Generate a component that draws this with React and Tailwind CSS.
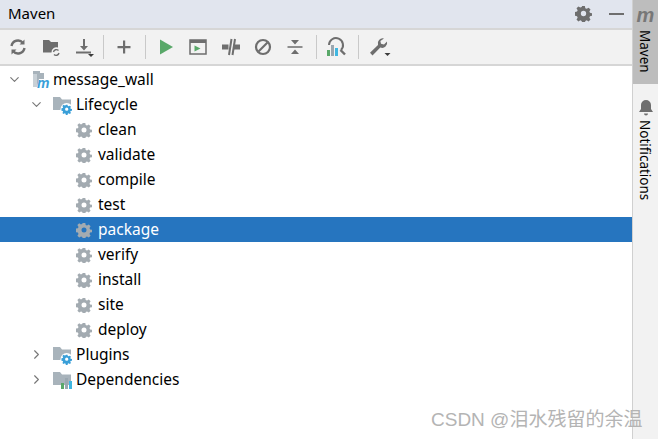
import { ChevronDown, ChevronRight } from "lucide-react";

const gearPath =
  "M6.700 1h2.600l.4 2 1.300.6 1.800-1.100 1.800 1.800-1.100 1.800.6 1.300 2 .4v2.400l-2 .4-.6 1.300 1.100 1.800-1.800 1.800-1.800-1.100-1.300.6-.4 2H6.700l-.4-2-1.300-.6-1.800 1.100-1.800-1.800 1.100-1.800-.6-1.300-2-.4V6.600l2-.4.6-1.300-1.100-1.800 1.800-1.800 1.800 1.100 1.300-.6zM8 5.500a2.500 2.500 0 1 0 0 5 2.500 2.500 0 0 0 0-5z";

function Gear({ size = 16, color = "#a3abb1", className = "" }) {
  return (
    <svg width={size} height={size} viewBox="0 0 16 16" className={className}>
      <path fill={color} fillRule="evenodd" d={gearPath} />
    </svg>
  );
}

function Folder({ children }) {
  return (
    <svg width="22" height="20" viewBox="0 0 22 20">
      <path fill="#a8b3bb" d="M1 2h7l2 2.500h9V15H1z" />
      {children}
    </svg>
  );
}

function SmallGear() {
  return (
    <g transform="translate(9.500 9) scale(0.65)">
      <circle cx="8" cy="8" r="9.500" fill="#fff" />
      <path fill="#3a9fd8" fillRule="evenodd" d={gearPath} />
    </g>
  );
}

function Bars({ x = 0, y = 0 }) {
  return (
    <g transform={`translate(${x} ${y})`}>
      <rect x="0" y="5" width="3" height="6" fill="#59a869" />
      <rect x="4" y="0" width="3" height="11" fill="#9aa7b0" />
      <rect x="8" y="3" width="3" height="8" fill="#40b6e0" />
    </g>
  );
}

function ToolIcon({ children }) {
  return (
    <svg width="20" height="20" viewBox="0 0 20 20" className="shrink-0">
      {children}
    </svg>
  );
}

const c = "#6e6e6e";

function Sep() {
  return <div className="mx-[5px] h-[24px] w-px shrink-0 bg-[#c9c9c9]" />;
}

function Toolbar() {
  return (
    <div className="flex h-[36px] shrink-0 items-center border-b-2 border-[#d6d6d6] bg-[#f2f2f2] pl-[8px]">
      {/* reload */}
      <ToolIcon>
        <path fill="none" stroke={c} strokeWidth="2.400" d="M3.500 9a6.500 6.500 0 0 1 11.500-3M16.500 11a6.500 6.500 0 0 1-11.500 3" />
        <path fill={c} d="M16.500 2.500v5h-5zM3.500 17.500v-5h5z" />
      </ToolIcon>
      <div className="w-[13px]" />
      {/* folder with reload */}
      <ToolIcon>
        <path fill={c} d="M2 3h6l2 2h7v5.500a5 5 0 0 0-6.500 5H2z" />
        <path fill="none" stroke={c} strokeWidth="1.400" d="M12.500 15a3 3 0 0 1 5-1.500M18 16a3 3 0 0 1-5 1.500" />
      </ToolIcon>
      <div className="w-[13px]" />
      {/* download */}
      <ToolIcon>
        <path fill={c} d="M9 2h2v7h3l-4 4.500L6 9h3zM2 14.500h15v2H2z" />
        <path fill="#3c3c3c" d="M14 17h6l-3 3z" />
      </ToolIcon>
      <div className="w-[4px]" />
      <Sep />
      <div className="w-[5px]" />
      {/* plus */}
      <ToolIcon>
        <path fill={c} d="M9 3.500h2.200V9h5.300v2.200h-5.300v5.300H9v-5.300H3.500V9H9z" />
      </ToolIcon>
      <div className="w-[6px]" />
      <Sep />
      <div className="w-[5px]" />
      {/* run */}
      <ToolIcon>
        <path fill="#59a869" d="M4 2.500 17 10 4 17.500z" />
      </ToolIcon>
      <div className="w-[12px]" />
      {/* run config */}
      <ToolIcon>
        <path fill="none" stroke={c} strokeWidth="1.500" d="M2 3h16v14H2z" />
        <path fill={c} d="M2 3h16v3H2z" />
        <path fill="#59a869" d="M6.500 8.500 12.500 11.500 6.500 14.500z" />
      </ToolIcon>
      <div className="w-[13px]" />
      {/* toggle offline */}
      <ToolIcon>
        <path fill={c} d="M1 7.500h6.500v5H1zM12.500 7.500H19v5h-6.500z" />
        <path fill="none" stroke={c} strokeWidth="2" d="M10.500 2 8 18M14 2l-2.500 16" />
      </ToolIcon>
      <div className="w-[12px]" />
      {/* skip tests */}
      <ToolIcon>
        <circle cx="10" cy="10" r="7" fill="none" stroke={c} strokeWidth="2.200" />
        <path stroke={c} strokeWidth="2.200" d="M5.500 14.500 14.500 5.500" />
      </ToolIcon>
      <div className="w-[12px]" />
      {/* collapse all */}
      <ToolIcon>
        <path fill={c} d="M2.500 9.200h15v1.600h-15zM6 3h8l-4 4.500zM10 12.500l4 4.500H6z" />
      </ToolIcon>
      <div className="w-[6px]" />
      <Sep />
      <div className="w-[3px]" />
      {/* analyze */}
      <svg width="22" height="22" viewBox="0 0 22 22" className="shrink-0">
        <path fill="none" stroke={c} strokeWidth="2" d="M4 9a7 7 0 1 1 12 5" />
        <path stroke={c} strokeWidth="2.400" d="m15.500 14 4.500 4.500" />
        <Bars x={2} y={9} />
      </svg>
      <div className="w-[6px]" />
      <Sep />
      <div className="w-[4px]" />
      {/* wrench */}
      <svg width="24" height="22" viewBox="0 0 24 22" className="shrink-0">
        <path fill={c} d="M16 2.500a5 5 0 0 0-6 6.500L2 16.800 4.500 19.500 12.300 11.500a5 5 0 0 0 6.700-6l-3 3-3-.8-.6-2.800z" />
        <path fill="#3c3c3c" d="M16.500 17h6l-3 3z" />
      </svg>
    </div>
  );
}

function Row({ depth, open, selected, icon, label }) {
  return (
    <div className={`flex h-[25px] items-center ${selected ? "bg-[#2675bf] text-white" : "text-black"}`}>
      <div style={{ width: depth * 22 + 5 }} className="shrink-0" />
      <div className="flex w-[18px] shrink-0 items-center justify-center">
        {open === true && <ChevronDown size={15} color="#777" strokeWidth={1.800} />}
        {open === false && <ChevronRight size={15} color="#777" strokeWidth={1.800} />}
      </div>
      <div className="ml-[7px] flex w-[22px] shrink-0 items-center">{icon}</div>
      <span style={{ marginLeft: depth === 0 ? 1 : 2 }}>{label}</span>
    </div>
  );
}

const goals = ["clean", "validate", "compile", "test", "package", "verify", "install", "site", "deploy"];

function ProjectIcon() {
  return (
    <svg width="22" height="20" viewBox="0 0 22 20">
      <path fill="#a8b3bb" d="M3 1h7v2h4v6H9L7 17H3z" />
      <path fill="#c8d0d6" d="M7 4H3v13h4z" />
      <text x="7" y="18" fontSize="14" fontWeight="700" fontStyle="italic" fill="#3a9fd8" fontFamily="Liberation Sans, sans-serif">m</text>
    </svg>
  );
}

export default function App() {
  return (
    <div className="relative flex h-[439px] w-[658px] overflow-hidden bg-white text-[15.500px] font-['Noto_Sans',sans-serif]">
      {/* main panel */}
      <div className="flex min-w-0 flex-1 flex-col">
        <div className="flex h-[30px] shrink-0 items-center border-b-2 border-[#d6d6d6] bg-[#e1e5ee] pb-px">
          <span className="ml-[8px] text-[15px] text-black">Maven</span>
          <div className="flex-1" />
          <Gear size={17} color="#6e6e6e" />
          <div className="ml-[17px] mr-[8px] h-[2px] w-[15px] bg-[#6e6e6e]" />
        </div>
        <Toolbar />
        <div className="pt-px">
          <Row depth={0} open={true} icon={<ProjectIcon />} label="message_wall" />
          <Row depth={1} open={true} icon={<Folder><SmallGear /></Folder>} label="Lifecycle" />
          {goals.map((g) => (
            <Row key={g} depth={2} icon={<Gear className="ml-[2px]" />} label={g} selected={g === "package"} />
          ))}
          <Row depth={1} open={false} icon={<Folder><SmallGear /></Folder>} label="Plugins" />
          <Row depth={1} open={false} icon={<Folder><Bars x={9} y={8} /></Folder>} label="Dependencies" />
        </div>
      </div>

      {/* right tool strip */}
      <div className="flex w-[26px] shrink-0 flex-col border-l border-[#d0d0d0] bg-[#f2f2f2] text-[13.500px] text-black">
        <div className="flex h-[84px] flex-col items-center bg-[#bdbdbd] pt-[5px]">
          <span className="font-['Liberation_Sans',sans-serif] text-[20px] leading-[20px] font-bold italic text-[#777]">m</span>
          <span className="mt-[5px] mr-[2px] leading-none [writing-mode:vertical-rl]">Maven</span>
        </div>
        <div className="mt-[15px] flex flex-col items-center">
          <svg width="16" height="18" viewBox="0 0 16 18">
            <path fill="#6e6e6e" d="M8 1a5 5 0 0 0-5 5v4l-2 3h14l-2-3V6a5 5 0 0 0-5-5zM6 14.500h4a2 2 0 0 1-4 0z" />
          </svg>
          <span className="mt-[3px] mr-[2px] leading-none [writing-mode:vertical-rl]">Notifications</span>
        </div>
      </div>

      {/* CSDN watermark over the screenshot */}
      <div className="absolute left-[431px] top-[408px] text-[19px] leading-[24px] text-[#b4b4b4] font-['Liberation_Sans','Noto_Sans_CJK_SC',sans-serif]">
        CSDN @泪水残留的余温
      </div>
    </div>
  );
}
